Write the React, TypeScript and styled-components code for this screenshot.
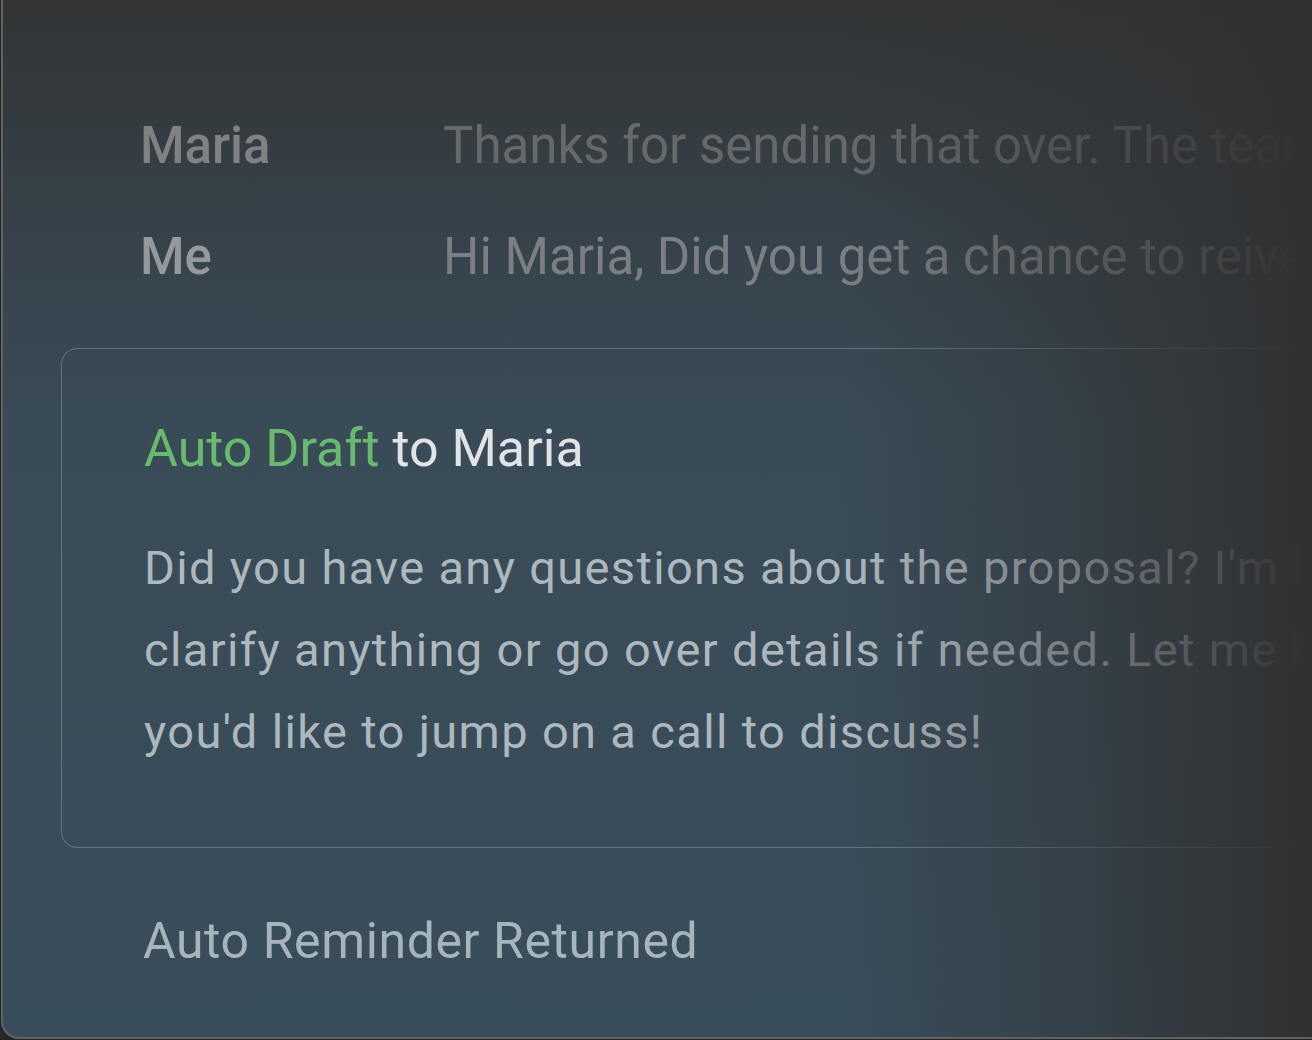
import styled, { createGlobalStyle } from "styled-components";

type Message = {
  from: string;
  text: string;
  strong?: boolean;
};

const GlobalStyle = createGlobalStyle`
  html, body {
    margin: 0;
    padding: 0;
    height: 100%;
    overflow: hidden;
    background: #262626;
  }
  body {
    font-family: Roboto, "Noto Sans", "Liberation Sans", sans-serif;
    -webkit-font-smoothing: antialiased;
  }
`;

const Panel = styled.section`
  position: relative;
  box-sizing: border-box;
  width: 1400px;
  height: 1039px;
  margin-left: 1px;
  padding: 90px 0 0 58px;
  border: 2px solid #616263;
  border-top: none;
  border-right: none;
  border-radius: 0 0 0 18px;
  overflow: hidden;
  background: linear-gradient(180deg, #323435 0%, #36424a 22%, #394b56 40%, #384d5b 100%);

  /* right-hand fade over text and background */
  &::after {
    content: "";
    position: absolute;
    inset: 0;
    pointer-events: none;
    background: linear-gradient(
      90deg,
      rgba(48, 49, 50, 0) 0%,
      rgba(48, 49, 50, 0) 60%,
      rgba(48, 49, 50, 0.45) 77%,
      rgba(48, 49, 50, 0.82) 88%,
      #303132 93%
    );
  }
`;

const Thread = styled.div`
  padding-left: 79px;
`;

const Row = styled.div`
  display: grid;
  grid-template-columns: 303px 1fr;
  height: 111px;
  line-height: 111px;
  font-size: 51px;
  white-space: nowrap;
`;

const Sender = styled.span<{ $strong?: boolean }>`
  font-weight: 500;
  color: ${(p) => (p.$strong ? "#96999c" : "#7f8183")};
`;

const Snippet = styled.span<{ $strong?: boolean }>`
  color: ${(p) => (p.$strong ? "#7b7f82" : "#65696c")};
`;

const DraftCard = styled.div`
  margin-top: 36px;
  padding: 70px 0 74px 82px;
  border: 1px solid rgba(170, 190, 200, 0.38);
  border-radius: 16px;
  white-space: nowrap;
`;

const DraftTitle = styled.h2`
  margin: 0;
  font-size: 52px;
  line-height: 60px;
  font-weight: 400;
  color: #e1e4e6;
`;

const Accent = styled.span`
  color: #67ba6e;
`;

const DraftBody = styled.p`
  margin: 48px 0 0;
  font-size: 47px;
  line-height: 82px;
  letter-spacing: 1.35px;
  color: #adb8be;
`;

const Status = styled.div`
  margin-top: 63px;
  padding-left: 82px;
  font-size: 50px;
  line-height: 60px;
  letter-spacing: 0.6px;
  color: #a8b4bb;
`;

const messages: Message[] = [
  { from: "Maria", text: "Thanks for sending that over. The team" },
  { from: "Me", text: "Hi Maria, Did you get a chance to reivew", strong: true },
];

const draftLines = [
  "Did you have any questions about the proposal? I'm happy",
  "clarify anything or go over details if needed. Let me know",
  "you'd like to jump on a call to discuss!",
];

export default function App() {
  return (
    <>
      <GlobalStyle />
      <Panel>
        <Thread>
          {messages.map((m) => (
            <Row key={m.from}>
              <Sender $strong={m.strong}>{m.from}</Sender>
              <Snippet $strong={m.strong}>{m.text}</Snippet>
            </Row>
          ))}
        </Thread>
        <DraftCard>
          <DraftTitle>
            <Accent>Auto Draft</Accent> to Maria
          </DraftTitle>
          <DraftBody>
            {draftLines.map((line, i) => (
              <span key={i}>
                {line}
                {i < draftLines.length - 1 && <br />}
              </span>
            ))}
          </DraftBody>
        </DraftCard>
        <Status>Auto Reminder Returned</Status>
      </Panel>
    </>
  );
}
